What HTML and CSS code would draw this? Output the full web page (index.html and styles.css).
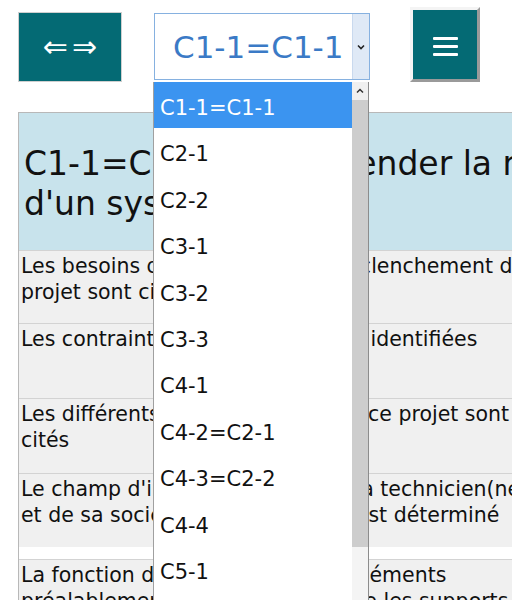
FILE: index.html
```html
<!DOCTYPE html>
<html lang="fr">
<head>
<meta charset="utf-8">
<title>Compétences</title>
<link rel="stylesheet" href="styles.css">
</head>
<body>
<div class="topbar">
  <button class="btn-swap" type="button">⇐⇒</button>
  <div class="picker">
    <div class="select">
      <span class="select-value">C1-1=C1-1</span>
      <span class="select-arrow"><svg width="8" height="6" viewBox="0 0 8 6"><path d="M1 1.5 L4 4.5 L7 1.5" fill="none" stroke="#222" stroke-width="1.6"/></svg></span>
    </div>
    <div class="options">
      <ul class="opt-list">
        <li class="opt selected">C1-1=C1-1</li>
        <li class="opt">C2-1</li>
        <li class="opt">C2-2</li>
        <li class="opt">C3-1</li>
        <li class="opt">C3-2</li>
        <li class="opt">C3-3</li>
        <li class="opt">C4-1</li>
        <li class="opt">C4-2=C2-1</li>
        <li class="opt">C4-3=C2-2</li>
        <li class="opt">C4-4</li>
        <li class="opt">C5-1</li>
        <li class="opt">C5-2</li>
      </ul>
      <div class="scrollbar">
        <div class="sb-up"><svg width="8" height="6" viewBox="0 0 8 6"><path d="M1 4.5 L4 1.5 L7 4.5" fill="none" stroke="#333" stroke-width="1.5"/></svg></div>
        <div class="sb-thumb"></div>
        <div class="sb-track"></div>
      </div>
    </div>
  </div>
  <button class="btn-menu" type="button"><span class="bar"></span><span class="bar"></span><span class="bar"></span></button>
</div>

<div class="table">
  <div class="thead"><h1 class="title">C1-1=C1-1 : Appréhender la mise en œuvre d'un système</h1></div>
  <div class="row r1"><div class="cell">Les besoins qui ont amené au déclenchement du projet sont cités</div><div class="cell"></div></div>
  <div class="row r2"><div class="cell">Les contraintes de ce projet, sont identifiées</div><div class="cell"></div></div>
  <div class="row r3"><div class="cell">Les différents acteurs, associés à ce projet sont cités</div><div class="cell"></div></div>
  <div class="row r4"><div class="cell">Le champ d'intervention du / de la technicien(ne) et de sa société ou de son unité est déterminé</div><div class="cell"></div></div>
  <div class="row r5"><div class="cell">La fonction de chacun des sous-éléments préalablement identifiés, ainsi que les supports et les moyens</div><div class="cell"></div></div>
</div>
</body>
</html>
```

FILE: styles.css
```css
html, body {
  margin: 0;
  padding: 0;
  overflow: hidden;
  background: #fff;
}
body {
  font-family: "DejaVu Sans", Verdana, sans-serif;
  color: #111;
  width: 512px;
  height: 600px;
}

.topbar {
  display: flex;
  align-items: flex-start;
  height: 82px;
}

.btn-swap {
  margin: 12px 0 0 18px;
  width: 104px;
  height: 70px;
  border: 1px solid #cfcfcf;
  background: #046a74;
  color: #fff;
  font-family: "DejaVu Sans", sans-serif;
  font-size: 30px;
  letter-spacing: 4px;
  padding: 0 0 0 4px;
  line-height: 1;
}

.picker {
  position: relative;
  margin: 13px 0 0 32px;
  width: 216px;
  height: 67px;
}
.select {
  box-sizing: border-box;
  width: 216px;
  height: 67px;
  border: 1px solid #86b1e0;
  background: #fff;
  display: flex;
  align-items: center;
}
.select-value {
  flex: 1;
  padding-left: 18px;
  font-size: 31px;
  color: #3b7ac6;
}
.select-arrow {
  align-self: stretch;
  width: 16px;
  background: #dfe9f6;
  border-left: 1px solid #c9d9ee;
  display: flex;
  align-items: center;
  justify-content: center;
}

.options {
  position: absolute;
  left: -1px;
  top: 69px;
  width: 216px;
  height: 540px;
  box-sizing: border-box;
  border-left: 1px solid #a0a0a0;
  border-right: 1px solid #8c8c8c;
  background: #fff;
  display: flex;
  z-index: 5;
}
.opt-list {
  list-style: none;
  margin: 0;
  padding: 0;
  flex: 1;
}
.opt {
  box-sizing: border-box;
  height: 46.4px;
  padding: 6px 0 0 6px;
  line-height: 40.4px;
  font-size: 21px;
  color: #111;
}
.opt.selected {
  background: #3b94f0;
  color: #fff;
}
.scrollbar {
  width: 16px;
  display: flex;
  flex-direction: column;
  background: #f0f0f0;
}
.sb-up {
  height: 18px;
  display: flex;
  align-items: center;
  justify-content: center;
}
.sb-thumb {
  height: 447px;
  background: #cdcdcd;
}
.sb-track {
  flex: 1;
  background: #f4f4f4;
}

.btn-menu {
  margin: 7px 0 0 40px;
  width: 70px;
  height: 75px;
  box-sizing: border-box;
  border: 3px solid;
  border-color: #f4f4f4 #9a9a9a #9a9a9a #f4f4f4;
  background: #046a74;
  padding: 4px 0 0 0;
  display: flex;
  flex-direction: column;
  align-items: center;
  justify-content: center;
  gap: 5px;
}
.btn-menu .bar {
  display: block;
  width: 25px;
  height: 3px;
  background: #fff;
  border-radius: 1px;
}

.table {
  margin: 30px 0 0 18px;
  width: 900px;
  border: 1px solid #b8b8b8;
  border-bottom: none;
  background: #fff;
}
.thead {
  background: #c8e3ec;
  padding: 31px 5px 26px 5px;
}
.title {
  margin: 0;
  max-width: 780px;
  font-size: 33px;
  line-height: 40px;
  font-weight: normal;
}
.row {
  display: grid;
  grid-template-columns: 524px 1fr;
  border-top: 1px solid #d3d3d3;
  background: #f0f0f0;
  box-sizing: border-box;
}
.cell {
  padding: 2px 2px 0 2px;
  font-size: 20.5px;
  line-height: 26px;
}
.r1 { height: 73px; }
.r2 { height: 75px; }
.r3 { height: 75px; }
.r4 { height: 74px; margin-bottom: 12px; }
.r5 { height: 80px; }
```
